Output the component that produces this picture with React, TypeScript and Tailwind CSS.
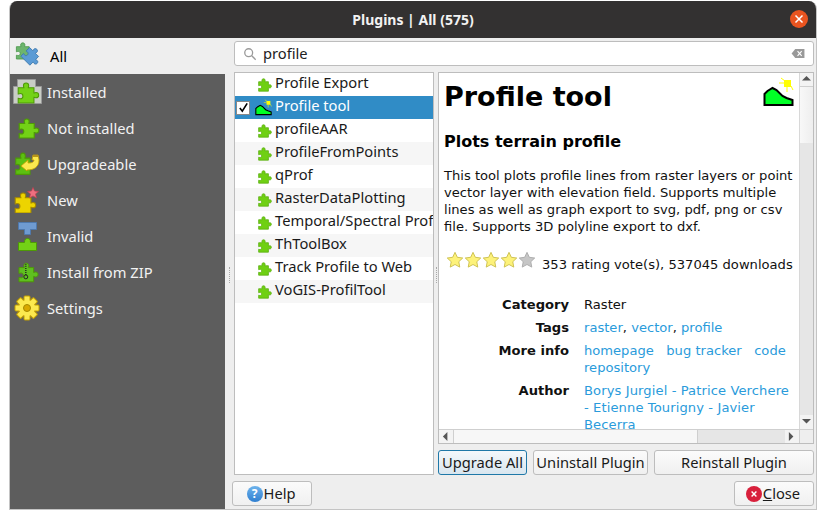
const ui = "font-['Noto_Sans',sans-serif]";

type IconProps = { className?: string };

const PUZZLE =
  "M9 3.5c0-1.5 1-2.5 2.5-2.5S14 2 14 3.5c0 .8-.4 1.2-.4 2H19v5c.8 0 1.2-.5 2-.5 1.5 0 2.5 1 2.5 2.5S22.5 15 21 15c-.8 0-1.2-.5-2-.5V20H4v-4.5c.8 0 1.2.5 2 .5 1.5 0 2.5-1 2.5-2.5S7.5 11 6 11c-.8 0-1.2.5-2 .5v-6h5.4c0-.8-.4-1.2-.4-2z";

function Puzzle({
  fill = "#73d216",
  stroke = "#4e9a06",
  className = "w-[16px] h-[16px]",
}: IconProps & { fill?: string; stroke?: string }) {
  return (
    <svg viewBox="3 0 21.5 21" className={className}>
      <path d={PUZZLE} fill={fill} stroke={stroke} strokeWidth="1.2" />
    </svg>
  );
}

function Terrain({ className }: IconProps) {
  return (
    <svg viewBox="0 0 31 30" className={className}>
      <path d="M1.5 28V17l3-3 5-3 4 2 6 6 4 2 6 2v5z" fill="#00ff26" stroke="#000" strokeWidth="2" />
      <rect x="21" y="3" width="7" height="7" fill="#ffff00" />
      <path d="M18 1l4 3M16 6h5M24 10v5M28 9l2 4" stroke="#ffff00" strokeWidth="1" />
    </svg>
  );
}

function Star({ on }: { on: boolean }) {
  return (
    <svg viewBox="0 0 20 20" className="h-[18px] w-[18px]">
      <path
        d="M10 1.5l2.6 5.5 6 .8-4.4 4.1 1.1 6L10 15l-5.3 2.9 1.1-6L1.400 7.8l6-.8z"
        fill={on ? "#fdf27a" : "#c6c6c6"}
        stroke={on ? "#c9bd4a" : "#a9a9a9"}
        strokeWidth="1"
      />
    </svg>
  );
}

function AllIcon() {
  return (
    <svg viewBox="0 0 30 30" className="h-[30px] w-[30px]">
      <g transform="translate(-2 1) scale(.85)">
        <path d={PUZZLE} fill="#6db56d" stroke="#4d9a4d" />
      </g>
      <g transform="translate(17 15.5) rotate(45) scale(.85) translate(-13.5 -11)">
        <path d={PUZZLE} fill="#5b9bd5" stroke="#3d78ad" />
      </g>
    </svg>
  );
}

function InstalledIcon() {
  return (
    <svg viewBox="0 0 29 26" className="h-[26px] w-[29px]">
      <path d="M4.5.5h18v7h6v17H.5v-17h4z" fill="#c9cdc5" stroke="#999" />
      <g transform="translate(1 3) scale(1.05)">
        <path d={PUZZLE} fill="#73d216" stroke="#4e9a06" />
      </g>
    </svg>
  );
}

function UpgradeIcon() {
  return (
    <svg viewBox="0 0 26 26" className="h-[26px] w-[26px]">
      <g transform="translate(-2 1) scale(.95 1.12)">
        <path d={PUZZLE} fill="#5cc012" stroke="#4e9a06" />
      </g>
      <path d="M7 15l7-6v3c4 0 6-1 6-3h-2l1-5h5l1 5c0 7-5 10-12 10v1z" fill="#fce94f" stroke="#c4a000" strokeWidth=".8" />
      <path d="M19 4h5l.5 2H19z" fill="#b8941a" />
    </svg>
  );
}

function NewIcon() {
  return (
    <svg viewBox="0 0 26 26" className="h-[26px] w-[26px]">
      <g transform="translate(-3 5) scale(1.05)">
        <path d={PUZZLE} fill="#edd400" stroke="#a68a00" />
      </g>
      <path d="M19 .5l1.5 3.5 4 .4-3 2.5 1 4-3.5-2-3.5 2 1-4-3-2.5 4-.4z" fill="#ef6f7f" stroke="#c04050" strokeWidth=".7" />
    </svg>
  );
}

function InvalidIcon() {
  return (
    <svg viewBox="0 0 19 29" className="h-[29px] w-[19px]">
      <path d="M.5.5h18v7h-6v5h-6v-5h-6z" fill="#6f9bd1" stroke="#4f79ad" />
      <path d="M6.5 20.500c0-3 1-4 3-4s3 1 3 4h6v8H.5v-8z" fill="#73d216" stroke="#4e9a06" />
    </svg>
  );
}

function ZipIcon() {
  return (
    <svg viewBox="3 0 21.5 22" className="ml-[2px] h-[22px] w-[21px]">
      <path d={PUZZLE} fill="#5fbf1f" stroke="#4e9a06" transform="translate(0 1)" />
      <path d="M11 3v11" stroke="#222" strokeWidth="1.4" strokeDasharray="1 1" />
      <circle cx="11" cy="16" r="2" fill="none" stroke="#222" />
    </svg>
  );
}

function GearIcon() {
  return (
    <svg viewBox="0 0 26 26" className="h-[26px] w-[26px]">
      {[0, 45, 90, 135, 180, 225, 270, 315].map((a) => (
        <rect key={a} x="10" y="1" width="6" height="8" rx="1" fill="#fce94f" stroke="#c4a000" transform={`rotate(${a} 13 13)`} />
      ))}
      <circle cx="13" cy="13" r="8" fill="#fce94f" />
      <circle cx="13" cy="13" r="3.5" fill="#d9a800" stroke="#a68a00" />
    </svg>
  );
}

const categories = [
  { label: "Installed", icon: <InstalledIcon /> },
  { label: "Not installed", icon: <Puzzle className="ml-[3px] h-[21px] w-[22px]" /> },
  { label: "Upgradeable", icon: <UpgradeIcon /> },
  { label: "New", icon: <NewIcon /> },
  { label: "Invalid", icon: <InvalidIcon /> },
  { label: "Install from ZIP", icon: <ZipIcon /> },
  { label: "Settings", icon: <GearIcon /> },
];

const plugins = [
  "Profile Export",
  "Profile tool",
  "profileAAR",
  "ProfileFromPoints",
  "qProf",
  "RasterDataPlotting",
  "Temporal/Spectral Profile Tool",
  "ThToolBox",
  "Track Profile to Web",
  "VoGIS-ProfilTool",
];

function Button({ children, className = "", active = false }: { children: React.ReactNode; className?: string; active?: boolean }) {
  return (
    <button
      className={`flex h-[25px] items-center justify-center rounded-[3px] border text-[14.7px] text-[#1a1a1a] ${
        active
          ? "border-[#1f78a8] bg-gradient-to-b from-[#f4f8fb] to-[#d9e6ef]"
          : "border-[#bdbdbd] bg-gradient-to-b from-[#fbfbfb] to-[#f0f0f0]"
      } ${className}`}
    >
      {children}
    </button>
  );
}

function Arrow({ dir }: { dir: "up" | "down" | "left" | "right" }) {
  const points = { up: "0,6 5,1 10,6", down: "0,1 10,1 5,6", left: "6,0 6,10 1,5", right: "1,0 1,10 6,5" }[dir];
  return (
    <svg viewBox="0 0 10 10" className="h-[9px] w-[9px]">
      <polygon points={points} fill="#555" />
    </svg>
  );
}

function MetaRow({ label, children }: { label: string; children: React.ReactNode }) {
  return (
    <div className="flex gap-[15px]">
      <div className="w-[125px] shrink-0 text-right font-bold">{label}</div>
      <div className="min-w-0 flex-1">{children}</div>
    </div>
  );
}

function SplitHandle({ className }: IconProps) {
  return <div className={`absolute top-[229px] h-[16px] w-[1px] border-l border-dotted border-[#a8a8a8] ${className}`} />;
}

export default function App() {
  return (
    <div className={`${ui} h-[519px] w-[827px] overflow-hidden bg-white pl-[9px] pt-[1px]`}>
      <div className="flex h-[509px] w-[808px] flex-col overflow-hidden rounded-t-[8px] border-x border-b border-[#c4c4c4] bg-[#eeeeee]">
        <div className="relative flex h-[37px] shrink-0 items-center justify-center bg-[#333131] text-[14px] font-bold text-[#f2f2f2]">
          Plugins | All (575)
          <div className="absolute right-[8px] top-[9px] flex h-[18px] w-[18px] items-center justify-center rounded-full bg-[#e95420]">
            <svg viewBox="0 0 10 10" className="h-[10px] w-[10px]">
              <path d="M1.5 1.5l7 7M8.5 1.5l-7 7" stroke="#fff" strokeWidth="1.5" />
            </svg>
          </div>
        </div>

        <div className="relative flex min-h-0 flex-1">
          <SplitHandle className="left-[219px]" />
          <SplitHandle className="left-[426px]" />
          <div className="flex w-[215px] shrink-0 flex-col">
            <div className="flex h-[36px] shrink-0 items-center gap-[5px] pl-[5px] text-[14.7px] text-black">
              <AllIcon />
              <span>All</span>
            </div>
            <div className="flex-1 bg-[#5d5d5d] text-[14.7px] text-[#f2f2f2]">
              {categories.map((c) => (
                <div key={c.label} className="flex h-[36px] items-center">
                  <div className="flex w-[34px] shrink-0 items-center justify-center">{c.icon}</div>
                  <span className="ml-[3px]">{c.label}</span>
                </div>
              ))}
            </div>
          </div>

          <div className="flex min-w-0 flex-1 flex-col pl-[7px] pr-[2px]">
            <div className="ml-[2px] mt-[3px] flex h-[25px] shrink-0 items-center rounded-[3px] border border-[#bdbdbd] bg-white pl-[8px] pr-[8px] text-[14.7px] text-[#222]">
              <svg viewBox="0 0 16 16" className="h-[14px] w-[14px]" fill="none" stroke="#9a9a9a" strokeWidth="1.5">
                <circle cx="6.5" cy="6.5" r="4.5" />
                <path d="M10 10l4.5 4.5" />
              </svg>
              <span className="ml-[6px] flex-1">profile</span>
              <svg viewBox="0 0 14 12" className="h-[11px] w-[14px]">
                <path d="M4 1h10v10H4L0 6z" fill="#999" />
                <path d="M6.5 3.5l4.5 5M11 3.5l-4.5 5" stroke="#fff" strokeWidth="1.2" />
              </svg>
            </div>

            <div className="ml-[2px] mt-[6px] flex h-[403px] shrink-0 gap-[4px]">
              <div className="h-full w-[200px] shrink-0 overflow-hidden border border-[#bdbdbd] bg-white text-[14.7px] text-[#1a1a1a]">
                {plugins.map((p, i) => (
                  <div
                    key={p}
                    className={`flex h-[23px] items-center whitespace-nowrap ${
                      i === 1 ? "bg-[#308cc6] text-white" : i % 2 === 1 ? "bg-[#f6f6f6]" : ""
                    }`}
                  >
                    <div className={`flex w-[37px] shrink-0 items-center ${i === 1 ? "justify-between pl-[1px]" : "justify-end"}`}>
                      {i === 1 ? (
                        <>
                          <span className="flex h-[14px] w-[14px] items-center justify-center border border-[#888] bg-white">
                            <svg viewBox="0 0 12 12" className="h-[11px] w-[11px]">
                              <path d="M2 6.5l2.7 3.5L10 1.5" fill="none" stroke="#000" strokeWidth="1.8" />
                            </svg>
                          </span>
                          <Terrain className="h-[17px] w-[17px]" />
                        </>
                      ) : (
                        <Puzzle className="h-[14px] w-[14px]" fill="#6fd013" stroke="#5cb012" />
                      )}
                    </div>
                    <span className="ml-[3px] pb-[4px]">{p}</span>
                  </div>
                ))}
              </div>

              <div className="flex min-w-0 flex-1 flex-col">
                <div className="flex h-[372px] shrink-0 flex-col border border-[#bdbdbd] bg-white">
                  <div className="flex min-h-0 flex-1">
                    <div className="relative min-w-0 flex-1 overflow-hidden pl-[5px] pr-[3px] font-['DejaVu_Sans',sans-serif] text-[13.1px] leading-[17px] text-[#111]">
                      <Terrain className="absolute right-[5px] top-[4px] h-[30px] w-[31px]" />
                      <h1 className="mt-[6px] text-[27px] font-bold leading-[36px] text-black">Profile tool</h1>
                      <h2 className="mt-[17px] text-[16px] font-bold leading-[20px] text-black">Plots terrain profile</h2>
                      <p className="mt-[15px]">
                        This tool plots profile lines from raster layers or point vector layer with elevation field. Supports multiple lines as well as graph export to svg, pdf, png or csv file. Supports 3D polyline export to dxf.
                      </p>
                      <div className="mt-[16px] flex items-start whitespace-nowrap">
                        <div className="flex w-[98px] shrink-0 pl-[2px]">
                          {[true, true, true, true, false].map((on, i) => (
                            <Star key={i} on={on} />
                          ))}
                        </div>
                        <span className="mt-[5px]">353 rating vote(s), 537045 downloads</span>
                      </div>
                      <div className="mt-[23px] flex flex-col gap-[6px] pr-[4px]">
                        <MetaRow label="Category">Raster</MetaRow>
                        <MetaRow label="Tags">
                          <span className="text-[#2a9bdb]">raster</span>, <span className="text-[#2a9bdb]">vector</span>, <span className="text-[#2a9bdb]">profile</span>
                        </MetaRow>
                        <MetaRow label="More info">
                          <span className="text-[#2a9bdb]">homepage &nbsp; bug tracker &nbsp; code repository</span>
                        </MetaRow>
                        <MetaRow label="Author">
                          <span className="tracking-[0.1px] text-[#2a9bdb]">Borys Jurgiel - Patrice Verchere - Etienne Tourigny - Javier Becerra</span>
                        </MetaRow>
                      </div>
                    </div>
                    <div className="flex w-[14px] shrink-0 flex-col border-l border-[#d8d8d8] bg-[#e6e6e6]">
                      <div className="flex h-[14px] shrink-0 items-center justify-center border-b border-[#cfcfcf] bg-[#f3f3f3]">
                        <Arrow dir="up" />
                      </div>
                      <div className="h-[56px] bg-gradient-to-r from-[#f8f8f8] to-[#eeeeee]" />
                      <div className="flex-1" />
                      <div className="flex h-[14px] shrink-0 items-center justify-center bg-[#f3f3f3]">
                        <Arrow dir="down" />
                      </div>
                    </div>
                  </div>
                  <div className="flex h-[14px] shrink-0 border-t border-[#cfcfcf] bg-[#e6e6e6]">
                    <div className="flex w-[14px] items-center justify-center bg-[#f3f3f3]">
                      <Arrow dir="left" />
                    </div>
                    <div className="w-[245px] border-x border-[#cfcfcf] bg-[#f7f7f7]" />
                    <div className="flex-1" />
                    <div className="flex w-[14px] items-center justify-center bg-[#f3f3f3]">
                      <Arrow dir="right" />
                    </div>
                    <div className="w-[14px] border-l border-[#cfcfcf] bg-[#eeeeee]" />
                  </div>
                </div>
                <div className="mt-[6px] flex gap-[6px]">
                  <Button active className="w-[89px]">Upgrade All</Button>
                  <Button className="w-[115px]">Uninstall Plugin</Button>
                  <Button className="flex-1">Reinstall Plugin</Button>
                </div>
              </div>
            </div>

            <div className="mt-[6px] flex justify-between">
              <Button className="w-[80px] pr-[2px]">
                <span className="mr-[1px] flex h-[16px] w-[16px] items-center justify-center rounded-full bg-gradient-to-b from-[#6db3ec] to-[#2f7fd0] text-[12px] font-bold text-white">?</span>
                Help
              </Button>
              <Button className="w-[80px] pr-[2px]">
                <span className="mr-[1px] flex h-[16px] w-[16px] items-center justify-center rounded-full bg-[#d8203c]">
                  <svg viewBox="0 0 10 10" className="h-[8px] w-[8px]">
                    <path d="M2 2l6 6M8 2l-6 6" stroke="#fff" strokeWidth="1.8" />
                  </svg>
                </span>
                <span><span className="underline">C</span>lose</span>
              </Button>
            </div>
          </div>
        </div>
      </div>
    </div>
  );
}
